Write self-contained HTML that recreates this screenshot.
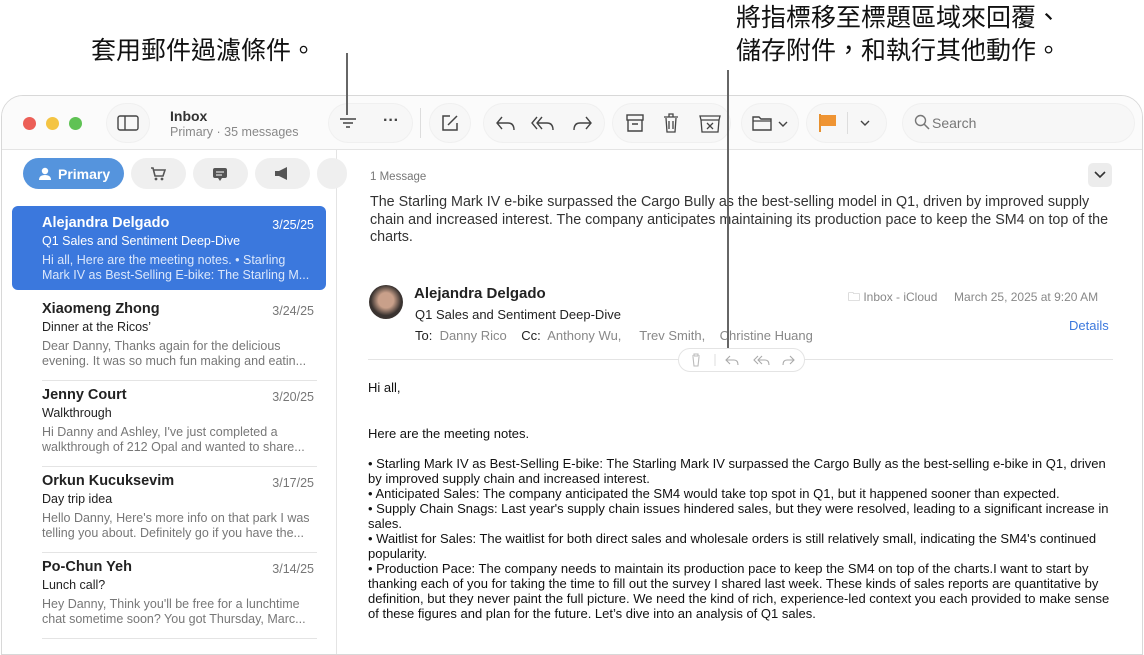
<!DOCTYPE html>
<html><head><meta charset="utf-8"><style>
*{box-sizing:border-box;margin:0;padding:0}
body{width:1144px;height:636px;background:#fff;font-family:"Liberation Sans","Noto Sans CJK TC",sans-serif;position:relative;overflow:hidden;color:#222}
.cap{position:absolute;font-size:25px;color:#111;line-height:33px}
.win{position:absolute;left:1px;top:95px;width:1142px;height:560px;border:1px solid #d8d8d8;border-radius:22px 22px 0 0;background:#fff;overflow:hidden}
.tb{position:absolute;left:0;top:0;width:100%;height:54px;background:#fbfbfb;border-bottom:1px solid #e4e4e4}
.pill{position:absolute;top:8px;height:38px;border-radius:19px;background:#f7f7f7;box-shadow:0 0 0 1px #f0f0f0}
.dot{position:absolute;top:21px;width:13px;height:13px;border-radius:50%}
svg{position:absolute}
.side{position:absolute;left:0;top:54px;width:335px;height:520px;border-right:1px solid #e4e4e4}
.tab{position:absolute;top:8px;height:31px;border-radius:16px;background:#efefef}
.item{position:absolute;left:40px;width:272px;font-size:12.5px;color:#777;line-height:15px;padding-right:4px}
.item b{display:block;font-size:14.5px;color:#222;font-weight:bold;margin-bottom:3px}
.item .s{color:#222;font-size:12.5px;margin-bottom:4px}
.item .d{position:absolute;right:0;top:2px;font-size:12.5px;color:#777}
.sep{position:absolute;left:40px;width:275px;border-top:1px solid #e4e4e4}
.line{position:absolute;width:2px;background:#666}
.body{position:absolute;left:366px;font-size:13px;color:#111;line-height:15px;width:750px}
</style></head><body>
<div class="cap" style="left:91px;top:35px">套用郵件過濾條件。</div>
<div class="cap" style="left:736px;top:2px">將指標移至標題區域來回覆、<br>儲存附件，和執行其他動作。</div>
<div class="win">
 <div class="tb">
  <div class="dot" style="left:21px;background:#ec5f57"></div>
  <div class="dot" style="left:44px;background:#f4c443"></div>
  <div class="dot" style="left:67px;background:#5fc254"></div>
  <div class="pill" style="left:105px;width:42px"></div>
  <svg style="left:115px;top:19px" width="22" height="16"><rect x="1" y="1" width="20" height="14" rx="2" fill="none" stroke="#444" stroke-width="1.4"/><line x1="8" y1="1" x2="8" y2="15" stroke="#444" stroke-width="1.4"/></svg>
  <div style="position:absolute;left:168px;top:12px;font-size:14px;font-weight:bold;color:#333">Inbox</div>
  <div style="position:absolute;left:168px;top:29px;font-size:12.5px;color:#888">Primary · 35 messages</div>
  <div class="pill" style="left:327px;width:83px"></div>
  <svg style="left:336px;top:20px" width="20" height="14"><path d="M2 3H18M5 7H15M8 11H12" stroke="#444" stroke-width="1.5"/></svg>
  <div style="position:absolute;left:381px;top:16px;font-size:16px;font-weight:bold;color:#444">···</div>
  <div style="position:absolute;left:418px;top:12px;width:1px;height:30px;background:#ddd"></div>
  <div class="pill" style="left:428px;width:40px"></div>
  <svg style="left:438px;top:17px" width="20" height="20"><path d="M10 3H3V17H17V10" fill="none" stroke="#444" stroke-width="1.5"/><path d="M8 12L17 3" stroke="#444" stroke-width="1.5"/></svg>
  <div class="pill" style="left:482px;width:120px"></div>
  <svg style="left:493px;top:18px" width="100" height="18"><path d="M7 3L2 9L7 15M2 9H13Q19 9 19 16" fill="none" stroke="#444" stroke-width="1.4"/><path d="M42 3L37 9L42 15M47 3L42 9L47 15M42 9H52Q58 9 58 16" fill="none" stroke="#444" stroke-width="1.4"/><path d="M91 3L96 9L91 15M96 9H85Q79 9 79 16" fill="none" stroke="#444" stroke-width="1.4"/></svg>
  <div class="pill" style="left:611px;width:117px"></div>
  <svg style="left:622px;top:16px" width="110" height="22"><rect x="3" y="3" width="16" height="5" fill="none" stroke="#444" stroke-width="1.4"/><path d="M4 8V19H18V8M8 12H14" fill="none" stroke="#444" stroke-width="1.4"/><path d="M40 5H54M45 5V2H49V5M42 6L43 20H51L52 6M45 9V17M49 9V17" fill="none" stroke="#444" stroke-width="1.3"/><path d="M76 4H96L95 8H77ZM77 8L78 20H94L95 8M83 11L89 17M89 11L83 17" fill="none" stroke="#444" stroke-width="1.3"/></svg>
  <div class="pill" style="left:740px;width:56px"></div>
  <svg style="left:750px;top:18px" width="40" height="18"><path d="M1 3H7L9 5H19V16H1Z" fill="none" stroke="#444" stroke-width="1.4"/><path d="M1 7H19" stroke="#444" stroke-width="1.2"/><path d="M27 8L31 12L35 8" fill="none" stroke="#444" stroke-width="1.4"/></svg>
  <div class="pill" style="left:805px;width:79px"></div>
  <svg style="left:816px;top:17px" width="60" height="20"><path d="M2 1V19" stroke="#e8912f" stroke-width="2"/><path d="M3 2H18V13H3Z" fill="#ef9433"/><path d="M43 8L47 12L51 8" fill="none" stroke="#444" stroke-width="1.4"/></svg>
  <div style="position:absolute;left:845px;top:16px;width:1px;height:22px;background:#ddd"></div>
  <div class="pill" style="left:901px;width:231px"></div>
  <svg style="left:912px;top:18px" width="16" height="16"><circle cx="6.5" cy="6.5" r="5" fill="none" stroke="#777" stroke-width="1.4"/><path d="M10 10L15 15" stroke="#777" stroke-width="1.5"/></svg>
  <div style="position:absolute;left:930px;top:19px;font-size:14px;color:#777">Search</div>
 </div>
 <div class="side">
  <div class="tab" style="left:21px;width:101px;background:#5594dd"></div>
  <svg style="left:36px;top:17px" width="14" height="14"><circle cx="7" cy="4" r="3.2" fill="#fff"/><path d="M1 13Q1 8 7 8Q13 8 13 13Z" fill="#fff"/></svg>
  <div style="position:absolute;left:56px;top:16px;color:#fff;font-size:14px;font-weight:bold">Primary</div>
  <div class="tab" style="left:129px;width:55px"></div>
  <svg style="left:148px;top:16px" width="16" height="15"><path d="M1 2H3L5 10H13L15 4H4" fill="none" stroke="#555" stroke-width="1.6"/><circle cx="6" cy="13" r="1.4" fill="#555"/><circle cx="12" cy="13" r="1.4" fill="#555"/></svg>
  <div class="tab" style="left:191px;width:55px"></div>
  <svg style="left:210px;top:17px" width="16" height="15"><rect x="1" y="1" width="14" height="10" rx="2" fill="#555"/><path d="M6 11L8 14L10 11" fill="#555"/><path d="M4 5H12M4 8H10" stroke="#fff"/></svg>
  <div class="tab" style="left:253px;width:55px"></div>
  <svg style="left:271px;top:16px" width="18" height="16"><path d="M2 5H6L14 1V14L6 10H2Z" fill="#555"/></svg>
  <div class="tab" style="left:315px;width:30px"></div>
  <div style="position:absolute;left:10px;top:56px;width:314px;height:84px;background:#3b78dd;border-radius:6px"></div>
  <div class="item" style="top:66px;color:#dbe7fb"><span class="d" style="color:#fff">3/25/25</span><b style="color:#fff">Alejandra Delgado</b><div class="s" style="color:#fff">Q1 Sales and Sentiment Deep-Dive</div>Hi all, Here are the meeting notes. • Starling Mark IV as Best-Selling E-bike: The Starling M...</div>
  <div class="item" style="top:152px"><span class="d">3/24/25</span><b>Xiaomeng Zhong</b><div class="s">Dinner at the Ricos’</div>Dear Danny, Thanks again for the delicious evening. It was so much fun making and eatin...</div>
  <div class="sep" style="top:230px"></div>
  <div class="item" style="top:238px"><span class="d">3/20/25</span><b>Jenny Court</b><div class="s">Walkthrough</div>Hi Danny and Ashley, I've just completed a walkthrough of 212 Opal and wanted to share...</div>
  <div class="sep" style="top:316px"></div>
  <div class="item" style="top:324px"><span class="d">3/17/25</span><b>Orkun Kucuksevim</b><div class="s">Day trip idea</div>Hello Danny, Here's more info on that park I was telling you about. Definitely go if you have the...</div>
  <div class="sep" style="top:402px"></div>
  <div class="item" style="top:410px"><span class="d">3/14/25</span><b>Po-Chun Yeh</b><div class="s">Lunch call?</div>Hey Danny, Think you'll be free for a lunchtime chat sometime soon? You got Thursday, Marc...</div>
  <div class="sep" style="top:488px"></div>
 </div>
 <div style="position:absolute;left:368px;top:75px;font-size:11.5px;color:#777">1 Message</div>
 <div style="position:absolute;left:1086px;top:67px;width:24px;height:24px;background:#ececec;border-radius:5px"></div>
 <svg style="left:1092px;top:75px" width="12" height="8"><path d="M1 1L6 6L11 1" fill="none" stroke="#333" stroke-width="1.6"/></svg>
 <div style="position:absolute;left:368px;top:98px;width:742px;font-size:14.3px;line-height:17.5px;color:#333">The Starling Mark IV e-bike surpassed the Cargo Bully as the best-selling model in Q1, driven by improved supply chain and increased interest. The company anticipates maintaining its production pace to keep the SM4 on top of the charts.</div>
 <div style="position:absolute;left:367px;top:189px;width:34px;height:34px;border-radius:50%;background:radial-gradient(circle at 50% 45%,#c9a08a 30%,#3a3330 60%)"></div>
 <div style="position:absolute;left:412px;top:189px;font-size:15px;font-weight:bold;color:#222">Alejandra Delgado</div>
 <div style="position:absolute;left:413px;top:211px;font-size:13px;color:#222">Q1 Sales and Sentiment Deep-Dive</div>
 <div style="position:absolute;left:413px;top:232px;font-size:13px;color:#888"><span style="color:#222">To:</span>&nbsp; Danny Rico &nbsp;&nbsp; <span style="color:#222">Cc:</span>&nbsp; Anthony Wu, &nbsp;&nbsp;&nbsp; Trev Smith, &nbsp;&nbsp;&nbsp;Christine Huang</div>
 <div style="position:absolute;left:846px;top:192px;font-size:12px;color:#888">🗀︎ Inbox - iCloud &nbsp;&nbsp;&nbsp; March 25, 2025 at 9:20 AM</div>
 <div style="position:absolute;left:1067px;top:222px;font-size:13px;color:#3b78dd">Details</div>
 <div style="position:absolute;left:366px;top:263px;width:745px;border-top:1px solid #e4e4e4"></div>
 <div style="position:absolute;left:676px;top:252px;width:127px;height:24px;border:1px solid #e4e4e4;border-radius:12px;background:#fff"></div>
 <svg style="left:686px;top:256px" width="110" height="16"><path d="M4 4H12M6 4V2H10V4M5 5L6 14H10L11 5" fill="none" stroke="#bbb" stroke-width="1.1"/><path d="M27 2V14" stroke="#ddd"/><path d="M42 4L38 8L42 12M38 8H46Q50 8 50 13" fill="none" stroke="#aaa" stroke-width="1.1"/><path d="M70 4L66 8L70 12M74 4L70 8L74 12M70 8H77Q81 8 81 13" fill="none" stroke="#aaa" stroke-width="1.1"/><path d="M102 4L106 8L102 12M106 8H99Q95 8 95 13" fill="none" stroke="#aaa" stroke-width="1.1"/></svg>
 <div class="body" style="top:284px">Hi all,</div>
 <div class="body" style="top:330px">Here are the meeting notes.</div>
 <div class="body" style="top:360px">• Starling Mark IV as Best-Selling E-bike: The Starling Mark IV surpassed the Cargo Bully as the best-selling e-bike in Q1, driven by improved supply chain and increased interest.<br>• Anticipated Sales: The company anticipated the SM4 would take top spot in Q1, but it happened sooner than expected.<br>• Supply Chain Snags: Last year's supply chain issues hindered sales, but they were resolved, leading to a significant increase in sales.<br>• Waitlist for Sales: The waitlist for both direct sales and wholesale orders is still relatively small, indicating the SM4's continued popularity.<br>• Production Pace: The company needs to maintain its production pace to keep the SM4 on top of the charts.I want to start by thanking each of you for taking the time to fill out the survey I shared last week. These kinds of sales reports are quantitative by definition, but they never paint the full picture. We need the kind of rich, experience-led context you each provided to make sense of these figures and plan for the future. Let’s dive into an analysis of Q1 sales.</div>
</div>
<div class="line" style="left:346px;top:53px;height:62px"></div>
<div class="line" style="left:727px;top:70px;height:278px"></div>
</body></html>
